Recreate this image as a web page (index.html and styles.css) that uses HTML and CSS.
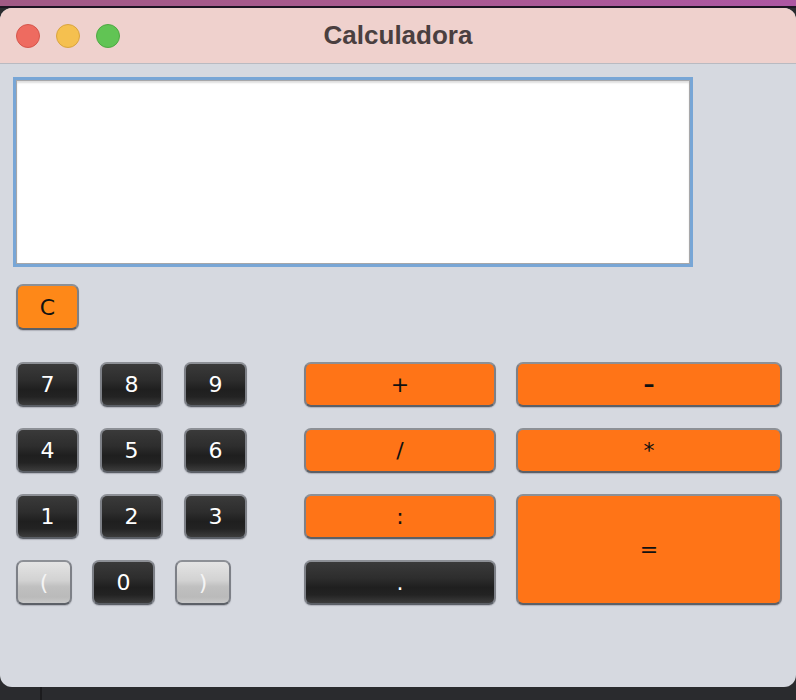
FILE: index.html
```html
<!DOCTYPE html>
<html lang="pt">
<head>
<meta charset="utf-8">
<title>Calculadora</title>
<link rel="stylesheet" href="styles.css">
</head>
<body>
<div class="desktop-strip"></div>
<div class="window">
  <div class="titlebar">
    <div class="lights">
      <span class="light red"></span>
      <span class="light yellow"></span>
      <span class="light green"></span>
    </div>
    <div class="title">Calculadora</div>
    <div class="spacer"></div>
  </div>
  <div class="content">
    <div class="display-ring"><div class="display"></div></div>
    <div class="clear-row"><button class="btn orange-c btn-c">C</button></div>
    <div class="keypad">
      <div class="digits">
        <div class="drow"><button class="btn dark dkey">7</button><button class="btn dark dkey">8</button><button class="btn dark dkey">9</button></div>
        <div class="drow"><button class="btn dark dkey">4</button><button class="btn dark dkey">5</button><button class="btn dark dkey">6</button></div>
        <div class="drow"><button class="btn dark dkey">1</button><button class="btn dark dkey">2</button><button class="btn dark dkey">3</button></div>
        <div class="drow last"><button class="btn light-btn pkey">(</button><button class="btn dark dkey">0</button><button class="btn light-btn pkey">)</button></div>
      </div>
      <div class="ops">
        <button class="btn orange">+</button>
        <button class="btn orange minus">–</button>
        <button class="btn orange">/</button>
        <button class="btn orange">*</button>
        <button class="btn orange">:</button>
        <button class="btn orange equals">=</button>
        <button class="btn dark">.</button>
      </div>
    </div>
  </div>
</div>
<div class="dock-area"><div class="dock-line"></div></div>
</body>
</html>
```

FILE: styles.css
```css
html, body {
  margin: 0;
  padding: 0;
}
body {
  background: #2a2b2e;
  width: 796px;
  height: 700px;
  overflow: hidden;
  font-family: "DejaVu Sans", "Liberation Sans", sans-serif;
}
.desktop-strip {
  height: 6px;
  background: linear-gradient(to right, #a15a85, #a95a8f 50%, #ad57a2);
  border-bottom: 2px solid #1d1522;
}
.window {
  height: 679px;
  width: 796px;
  background: #d6d9e0;
  border-radius: 12px;
  overflow: hidden;
  display: flex;
  flex-direction: column;
}
.titlebar {
  height: 55px;
  flex: none;
  background: #efd1cd;
  border-bottom: 1px solid #b9bac1;
  display: grid;
  grid-template-columns: 1fr auto 1fr;
  align-items: center;
}
.lights {
  display: flex;
  gap: 16px;
  padding-left: 16px;
}
.light {
  width: 24px;
  height: 24px;
  border-radius: 50%;
  box-sizing: border-box;
  display: block;
}
.red { background: #ee6b60; border: 1px solid #d5564c; }
.yellow { background: #f5c04f; border: 1px solid #d9a440; }
.green { background: #61c454; border: 1px solid #4fa843; }
.title {
  font-family: "Liberation Sans", Arial, sans-serif;
  font-weight: bold;
  font-size: 26px;
  color: #4a3f40;
  padding-bottom: 1px;
}
.content {
  padding: 16px 0 0 16px;
  display: flex;
  flex-direction: column;
}
.display-ring {
  width: 674px;
  height: 184px;
  border: 1px solid #a7a7a9;
  outline: 3px solid #78a6d6;
  box-sizing: border-box;
  background: #fff;
}
.display {
  height: 100%;
  box-shadow: inset 0 2px 2px rgba(0,0,0,0.13);
}
.clear-row {
  margin-top: 20px;
  display: flex;
}
.btn {
  box-sizing: border-box;
  height: 45px;
  margin: 0;
  padding: 0;
  border: 2px solid;
  border-color: #8d9096 #7d8087 #5c6067;
  border-radius: 7px;
  box-shadow: 0 1px 1px rgba(60,60,70,0.25);
  font-family: "DejaVu Sans", "Liberation Sans", sans-serif;
  font-size: 22px;
  display: flex;
  align-items: center;
  justify-content: center;
}
.btn-c {
  width: 63px;
  height: 46px;
}
.orange-c {
  background: #fe8818;
  color: #111;
}
.orange {
  background: #ff7417;
  color: #111;
}
.minus {
  font-weight: bold;
}
.dark {
  background: linear-gradient(#3a3a3a 0%, #2d2d2d 40%, #1f1f1f 62%, #232323 80%, #3c3c3c 100%);
  color: #fff;
}
.light-btn {
  background: linear-gradient(#e4e4e4 0%, #d2d2d2 45%, #c0c0c0 60%, #bababa 85%, #c8c8c8 100%);
  color: #f4f4f4;
}
.keypad {
  margin-top: 32px;
  display: flex;
  gap: 57px;
}
.digits {
  display: flex;
  flex-direction: column;
  gap: 21px;
}
.drow {
  display: flex;
  gap: 21px;
}
.drow.last {
  gap: 20px;
}
.dkey {
  width: 63px;
}
.pkey {
  width: 56px;
}
.ops {
  display: grid;
  grid-template-columns: 192px 266px;
  grid-auto-rows: 45px;
  column-gap: 20px;
  row-gap: 21px;
}
.equals {
  grid-column: 2;
  grid-row: 3 / span 2;
  height: auto;
}
.ops .dark {
  grid-column: 1;
  grid-row: 4;
}
.dock-area {
  height: 13px;
}
.dock-line {
  width: 2px;
  height: 13px;
  margin-left: 40px;
  background: #1c1c1e;
}
```
